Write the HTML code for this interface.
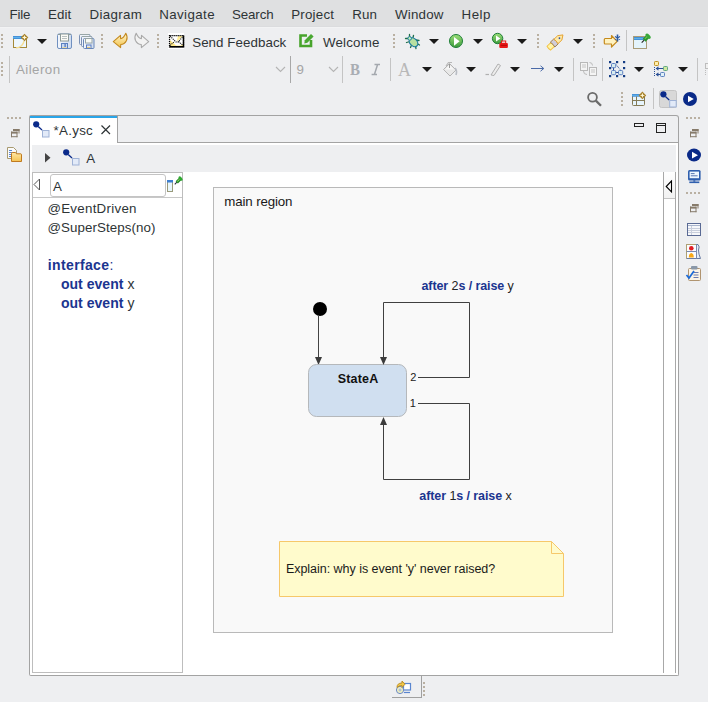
<!DOCTYPE html>
<html><head><meta charset="utf-8">
<style>
*{margin:0;padding:0;box-sizing:border-box}
html,body{width:708px;height:702px;overflow:hidden;background:#eeeff1;font-family:"Liberation Sans",sans-serif;color:#2e3436}
.a{position:absolute}
.t{position:absolute;white-space:pre;font-size:13.33px;line-height:16px}
.t b{font-weight:bold}
.grip{position:absolute;width:2px;background:repeating-linear-gradient(#b9b0a2 0 2px,transparent 2px 4px)}
.hgrip{position:absolute;height:2px;background:repeating-linear-gradient(90deg,#b9b0a2 0 2px,transparent 2px 4px)}
.sep{position:absolute;width:1px;background:#c4c4c4}
.dd{position:absolute;width:0;height:0;border-left:5px solid transparent;border-right:5px solid transparent;border-top:5px solid #1a1a1a}
svg{position:absolute;overflow:visible}
</style></head><body>
<div class="a" style="left:0;top:0;width:708px;height:26px;background:#dfe0e1"></div>
<div class="a" style="left:0;top:26px;width:708px;height:1px;background:#dbdcde"></div>
<div class="a" style="left:0;top:27px;width:708px;height:1px;background:#f2f3f4"></div>

<!-- toolbar row 1 -->
<div class="grip" style="left:1px;top:34px;height:14px"></div>
<div class="dd" style="left:37px;top:39px"></div>
<div class="grip" style="left:101px;top:34px;height:14px"></div>
<div class="grip" style="left:157px;top:34px;height:14px"></div>
<div class="grip" style="left:393px;top:34px;height:14px"></div>
<div class="dd" style="left:429px;top:39px"></div>
<div class="dd" style="left:473px;top:39px"></div>
<div class="dd" style="left:517px;top:39px"></div>
<div class="grip" style="left:537px;top:34px;height:14px"></div>
<div class="dd" style="left:573px;top:39px"></div>
<div class="grip" style="left:593px;top:34px;height:14px"></div>
<div class="sep" style="left:626px;top:30px;height:21px"></div>

<!-- toolbar row 2 -->
<div class="grip" style="left:1px;top:62px;height:14px"></div>
<div class="sep" style="left:9px;top:56px;height:27px"></div>
<div class="sep" style="left:290px;top:56px;height:27px;background:#a8a8a8"></div>
<div class="sep" style="left:342px;top:56px;height:27px"></div>
<div class="sep" style="left:390px;top:58px;height:23px"></div>
<div class="dd" style="left:422px;top:67px"></div>
<div class="dd" style="left:466px;top:67px"></div>
<div class="dd" style="left:510px;top:67px"></div>
<div class="dd" style="left:554px;top:67px"></div>
<div class="sep" style="left:573px;top:58px;height:23px"></div>
<div class="sep" style="left:602px;top:58px;height:23px"></div>
<div class="dd" style="left:634px;top:67px"></div>
<div class="dd" style="left:678px;top:67px"></div>
<div class="sep" style="left:697px;top:58px;height:23px"></div>

<!-- toolbar row 3 -->
<div class="grip" style="left:621px;top:92px;height:14px"></div>
<div class="sep" style="left:653px;top:88px;height:21px"></div>

<!-- trims -->
<div class="hgrip" style="left:7px;top:117px;width:14px"></div>
<div class="hgrip" style="left:686px;top:117px;width:14px"></div>
<div class="hgrip" style="left:686px;top:192px;width:14px"></div>

<!-- editor frame -->
<div class="a" style="left:29px;top:142px;width:650px;height:534px;border:1px solid #a3a3a3;border-top:none;border-radius:0 0 2px 2px;background:#fff"></div>
<div class="a" style="left:117px;top:115px;width:562px;height:28px;border:1px solid #a3a3a3;border-left:none;border-top-right-radius:3px;background:#eeeff1"></div>
<div class="a" style="left:29px;top:115px;width:89px;height:28px;border:1px solid #a3a3a3;border-bottom:none;border-top-left-radius:2px;background:#fff"></div>
<div class="a" style="left:30px;top:116px;width:87px;height:2px;background:#2aa5e8"></div>
<div class="a" style="left:32px;top:145px;width:644px;height:27px;background:#eeeff1"></div>

<!-- outline panel -->
<div class="a" style="left:32px;top:172px;width:151px;height:501px;border:1px solid #bdbdbd;background:#fff"></div>
<div class="a" style="left:33px;top:197px;width:149px;height:1px;background:#c8c8c8"></div>
<div class="a" style="left:50px;top:174px;width:116px;height:23px;border:1px solid #c4c4c4;border-radius:3px;background:#fff"></div>

<!-- palette strip -->
<div class="a" style="left:663px;top:172px;width:13px;height:501px;border-left:1px solid #a8a8a8;border-right:1px solid #a8a8a8;background:#fff"></div>
<div class="a" style="left:664px;top:172px;width:11px;height:27px;background:linear-gradient(#fff,#f2f2f2);border-bottom:1px solid #c4c4c4"></div>

<!-- diagram region -->
<div class="a" style="left:213px;top:187px;width:400px;height:446px;border:1px solid #b9b9b9;background:#f9f9f9"></div>

<!-- diagram svg -->
<svg width="708" height="702" style="left:0;top:0" shape-rendering="auto">
<circle cx="320" cy="309" r="7" fill="#000"/>
<rect x="318" y="316" width="1" height="42" fill="#444"/>
<path d="M315 357 L322 357 L318.5 365 Z" fill="#3c3c3c"/>
<rect x="308.5" y="364.5" width="98" height="52" rx="8" ry="8" fill="#d0dff0" stroke="#b5b8bb" stroke-width="1"/>
<path d="M418 377.5 H469.5 V302.5 H383.5 V358" fill="none" stroke="#404040" stroke-width="1"/>
<path d="M380 357 L387 357 L383.5 365 Z" fill="#3c3c3c"/>
<path d="M418 403.5 H469.5 V479.5 H383.5 V424" fill="none" stroke="#404040" stroke-width="1"/>
<path d="M380 425 L387 425 L383.5 417 Z" fill="#3c3c3c"/>
<path d="M279.5 541.5 H551.5 L563.5 553.5 V596.5 H279.5 Z" fill="#fffbcc" stroke="#f6c86a" stroke-width="1"/>
<path d="M551.5 541.5 V553.5 H563.5" fill="none" stroke="#f6c86a" stroke-width="1"/>
</svg>

<!-- status bar -->
<div class="a" style="left:392px;top:697px;width:30px;height:1px;background:#a0a0a0"></div>
<div class="a" style="left:421px;top:676px;width:1px;height:22px;background:#a0a0a0"></div>
<div class="grip" style="left:423px;top:682px;height:14px"></div>

<!-- TEXTS -->
<div class="t" style="left:9.5px;top:7px;letter-spacing:-0.17px;">File</div>
<div class="t" style="left:48.1px;top:7px;letter-spacing:0.07px;">Edit</div>
<div class="t" style="left:89.4px;top:7px;letter-spacing:0.37px;">Diagram</div>
<div class="t" style="left:159.2px;top:7px;letter-spacing:0.4px;">Navigate</div>
<div class="t" style="left:232.0px;top:7px;letter-spacing:-0.12px;">Search</div>
<div class="t" style="left:291.2px;top:7px;letter-spacing:0.23px;">Project</div>
<div class="t" style="left:352.2px;top:7px;letter-spacing:0.15px;">Run</div>
<div class="t" style="left:395.09999999999997px;top:7px;letter-spacing:0.18px;">Window</div>
<div class="t" style="left:461.5px;top:7px;letter-spacing:0.53px;">Help</div>
<div class="t" style="left:192.2px;top:35px;letter-spacing:0.06px;">Send Feedback</div>
<div class="t" style="left:323.0px;top:35px;letter-spacing:0.17px;">Welcome</div>
<div class="t" style="left:16.0px;top:62px;letter-spacing:0.43px;color:#a5a5a5">Aileron</div>
<div class="t" style="left:296.6px;top:62px;letter-spacing:0.0px;color:#a5a5a5">9</div>
<div class="t" style="left:53.5px;top:123px;letter-spacing:0.3px;">*A.ysc</div>
<div class="t" style="left:86.3px;top:151px;letter-spacing:0.0px;">A</div>
<div class="t" style="left:53.0px;top:179px;letter-spacing:0.0px;">A</div>
<div class="t" style="left:47.4px;top:201px;letter-spacing:0.27px;">@EventDriven</div>
<div class="t" style="left:47.4px;top:220px;letter-spacing:0.09px;">@SuperSteps(no)</div>
<div class="t" style="left:47.8px;top:257px;letter-spacing:0.36px;font-size:14px;color:#1b3590"><b>interface</b>:</div>
<div class="t" style="left:60.9px;top:276px;letter-spacing:0.04px;font-size:14px;color:#1b3590"><b>out event</b> <span style="color:#2e3436">x</span></div>
<div class="t" style="left:60.9px;top:295px;letter-spacing:0.04px;font-size:14px;color:#1b3590"><b>out event</b> <span style="color:#2e3436">y</span></div>
<div class="t" style="left:224.2px;top:194px;letter-spacing:-0.13px;color:#1a1a1a">main region</div>
<div class="t" style="left:337.7px;top:371px;letter-spacing:0.18px;font-size:12.5px;color:#111"><b>StateA</b></div>
<div class="t" style="left:410.2px;top:369px;letter-spacing:0.0px;font-size:11px;color:#222">2</div>
<div class="t" style="left:409.7px;top:395px;letter-spacing:0.0px;font-size:11px;color:#222">1</div>
<div class="t" style="left:421.5px;top:278px;letter-spacing:-0.09px;font-size:12.5px;color:#222"><b style="color:#1b3590">after</b> 2<b style="color:#1b3590">s / raise</b> y</div>
<div class="t" style="left:419.3px;top:488px;letter-spacing:-0.08px;font-size:12.5px;color:#222"><b style="color:#1b3590">after</b> 1<b style="color:#1b3590">s / raise</b> x</div>
<div class="t" style="left:285.9px;top:561px;letter-spacing:-0.03px;font-size:12.5px;color:#1a1a1a">Explain: why is event 'y' never raised?</div>
<div class="t" style="left:349.5px;top:61px;font-family:'Liberation Serif',serif;font-weight:bold;font-size:17px;line-height:18px;color:#a9adb3;transform:scaleX(0.88);transform-origin:0 0">B</div>
<div class="t" style="left:398px;top:61px;font-family:'Liberation Serif',serif;font-size:18px;line-height:18px;color:#b8b8b8">A</div>

<!-- ICONS -->
<svg width="708" height="702" style="left:0;top:0;pointer-events:none">
<defs>
<linearGradient id="gGold" x1="0" y1="0" x2="0" y2="1"><stop offset="0" stop-color="#fff6cf"/><stop offset="1" stop-color="#f2c24a"/></linearGradient>
<linearGradient id="gGreen" x1="0" y1="0" x2="0" y2="1"><stop offset="0" stop-color="#9ee07a"/><stop offset="1" stop-color="#3c9a3c"/></linearGradient>
<linearGradient id="gBlueBar" x1="0" y1="0" x2="0" y2="1"><stop offset="0" stop-color="#3b7fcf"/><stop offset="0.5" stop-color="#5db2ea"/><stop offset="1" stop-color="#3a80cf"/></linearGradient>
<linearGradient id="gFloppy" x1="0" y1="0" x2="1" y2="0"><stop offset="0" stop-color="#f4f7fc"/><stop offset="1" stop-color="#cfdcf0"/></linearGradient>
<linearGradient id="gFolder" x1="0" y1="0" x2="0" y2="1"><stop offset="0" stop-color="#ffe9a8"/><stop offset="1" stop-color="#f5c252"/></linearGradient>
<g id="star"><path d="M0 -3.8 L3.8 0 L0 3.8 L-3.8 0 Z" fill="#a8822a"/><path d="M0 -2.6 L0.7 -0.7 L2.6 0 L0.7 0.7 L0 2.6 L-0.7 0.7 L-2.6 0 L-0.7 -0.7 Z" fill="#fff8d8"/></g>
<g id="floppy">
 <rect x="0.5" y="0.5" width="14" height="14.5" rx="1.5" fill="url(#gFloppy)" stroke="#7090c0"/>
 <path d="M1 1 H14" stroke="#8c9c9a" stroke-width="1"/>
 <rect x="3.5" y="0.5" width="8" height="7" fill="#fbfbf6" stroke="#8c9a98"/>
 <path d="M5 3 H10 M5 5 H10" stroke="#b8c0c0" stroke-width="1"/>
 <rect x="4" y="9.5" width="7" height="5.5" fill="#5a80c0"/>
 <rect x="5" y="10.5" width="5" height="4" fill="#c8daf4"/>
 <rect x="7.5" y="10.5" width="1.2" height="3" fill="#4a70b8"/>
 <rect x="5" y="13.6" width="5" height="0.9" fill="#e8d8a0"/>
</g>
<g id="restore" fill="#867a6a"><rect x="2" y="0" width="6.5" height="2"/><rect x="7.5" y="0" width="1" height="4.5"/><rect x="0" y="2.6" width="6.5" height="5.6" fill="#eeeff1"/><rect x="0" y="2.6" width="6.5" height="2"/><rect x="0" y="2.6" width="1" height="5.6"/><rect x="5.5" y="2.6" width="1" height="5.6"/><rect x="0" y="7.2" width="6.5" height="1"/></g>
<g id="sc"><circle cx="3.2" cy="3.3" r="3.1" fill="#0a2a8a"/><path d="M5.2 5.5 L9 9" stroke="#0a2a8a" stroke-width="1.3"/><rect x="9.5" y="9.5" width="6.5" height="6.5" fill="#e2eaf8" stroke="#9fb2d6" stroke-width="1"/></g>
</defs>

<!-- row1 -->
<!-- new -->
<rect x="13.5" y="36.5" width="13" height="11" fill="#eef7fd" stroke="#a48a3a"/>
<rect x="13" y="36" width="11" height="3" fill="url(#gBlueBar)"/>
<path d="M24 41 Q23 47 16 48" stroke="#f6df95" stroke-width="1.5" fill="none"/>
<use href="#star" x="24.5" y="37.5"/>
<!-- save -->
<use href="#floppy" x="57" y="33.5"/>
<!-- save all -->
<rect x="79.5" y="34.5" width="10.5" height="10" rx="1" fill="#eef2fa" stroke="#7a90b4"/>
<path d="M80 34.5 H89.5" stroke="#98a6a6"/>
<rect x="81.5" y="36.5" width="10.5" height="10" rx="1" fill="#eef2fa" stroke="#7a90b4"/>
<path d="M82 36.5 H91.5" stroke="#98a6a6"/>
<rect x="83.5" y="38.5" width="10.5" height="10" rx="1" fill="url(#gFloppy)" stroke="#6a88b8"/>
<rect x="85.5" y="38.5" width="6.5" height="4.5" fill="#f8faf6" stroke="#98a6a6"/>
<rect x="86" y="44.5" width="5.5" height="4" fill="#5a7cc0"/>
<rect x="87" y="45.5" width="3.5" height="2.5" fill="#dfe8f6"/>
<rect x="87" y="47" width="3.5" height="1" fill="#e0c880"/>
<!-- undo -->
<path d="M113.3 41.6 L120.5 35.3 L120.6 38.6 Q123.5 38.5 125.8 33.2 Q128 37 126.5 40.5 Q124.5 44.5 120.7 44.5 L120.6 47.6 Z" fill="url(#gGold)" stroke="#c3891f" stroke-width="1.1" stroke-linejoin="round"/>
<!-- redo -->
<path d="M148.7 41.6 L141.5 35.3 L141.4 38.6 Q138.5 38.5 136.2 33.2 Q134 37 135.5 40.5 Q137.5 44.5 141.3 44.5 L141.4 47.6 Z" fill="#f2f2f2" stroke="#a9a9a9" stroke-width="1.1" stroke-linejoin="round"/>
<!-- envelope -->
<rect x="168" y="33" width="16" height="16" fill="#fff"/>
<path d="M170 40 L176 45.5 H181 L183 44 V46.5 H170 Z" fill="#ffe46a" opacity="0.8"/>
<path d="M178 36 L183 36 L176.5 42 Z" fill="#ffe46a" opacity="0.7"/>
<rect x="169.5" y="35.6" width="14" height="11.2" fill="none" stroke="#000" stroke-width="1.3" stroke-dasharray="1.3 0.7"/>
<path d="M169.5 46.8 H183.5 V35.6" fill="none" stroke="#000" stroke-width="1.4"/>
<path d="M170 36 L176 42 H178 L183.5 36 M170 45.5 L174.5 41.5 M178.5 41.5 L182.5 45" fill="none" stroke="#222" stroke-width="1.1" stroke-dasharray="1.2 0.8"/>
<!-- green edit -->
<path d="M307 35.5 H300.5 V46 H311 V40" fill="none" stroke="#48a42c" stroke-width="2.6"/>
<path d="M304.3 43.5 L304.8 40.3 L311 34 L313.6 36.6 L307.4 42.8 Z" fill="#4aa832"/>
<!-- bug -->
<g stroke="#1f6e4a" stroke-width="1.3" fill="none" stroke-linecap="round">
<path d="M409.5 38 L409.5 34.5 M413 37.5 L413.5 35.5 M408 38.5 L405.5 38.5 M410 41.5 L406.5 42.5 M412 44 L410.5 47.5 M415.5 46 L416 48.5 M416 40 L419 40.5 M417 43.5 L419.5 45"/>
</g>
<ellipse cx="413.5" cy="42.3" rx="3.6" ry="5" transform="rotate(-42 413.5 42.3)" fill="#b8e0a0" stroke="#1d7ca2" stroke-width="1.2"/>
<circle cx="409.7" cy="38.4" r="1.8" fill="#c8f0b8" stroke="#1d7ca2" stroke-width="1"/>
<!-- run -->
<circle cx="456" cy="41" r="6.5" fill="url(#gGreen)" stroke="#1e7e38" stroke-width="1"/>
<path d="M454 37 L459.6 41.3 L454 45.8 Z" fill="#fff"/>
<!-- run ext -->
<circle cx="497.6" cy="38.5" r="5.2" fill="url(#gGreen)" stroke="#1e7e38" stroke-width="1"/>
<path d="M496 35.6 L500.4 38.6 L496 41.6 Z" fill="#fff"/>
<rect x="499.3" y="43" width="8.6" height="5" rx="1" fill="#e81818"/>
<rect x="501.5" y="41" width="4.2" height="2.3" fill="none" stroke="#e81818" stroke-width="1"/>
<path d="M500.5 45.3 H507" stroke="#a00" stroke-width="0.8"/>
<!-- pen -->
<g transform="translate(555.8 41.6) rotate(-43)">
<path d="M-9.6 -2.6 H-4 V2.6 H-9.6 Q-10.3 0 -9.6 -2.6 Z" fill="#fff4a8" stroke="#f2c244" stroke-width="1"/>
<path d="M-4.4 -3.3 H0.2 Q1.1 0 0.2 3.3 H-4.4 Q-3.5 0 -4.4 -3.3 Z" fill="#d0ccd8" stroke="#9c7c4c" stroke-width="0.9"/>
<path d="M0.2 -3 H5.5 L9.8 0 L5.5 3 H0.2 Q1.1 0 0.2 -3 Z" fill="#fde9a8" stroke="#e4a02c" stroke-width="0.9"/>
<circle cx="5" cy="0" r="0.9" fill="#3050a8"/>
</g>
<!-- arrow star -->
<path d="M605.2 38.5 H611.5 V35.5 L617.2 41.3 L611.5 47 V44 H605.2 Q604.3 44 604.3 43 V39.5 Q604.3 38.5 605.2 38.5 Z" fill="#fff2c0" stroke="#c58a1c" stroke-width="1.2" stroke-linejoin="round"/>
<g stroke="#2d5aa0"><path d="M617.5 34.5 V41.5" stroke-width="1.6"/><path d="M615 36.6 L620 39.4 M620 36.6 L615 39.4" stroke-width="1.1"/></g>
<!-- window pen -->
<rect x="633.5" y="36.5" width="13" height="12" fill="#e4f4fb" stroke="#a89c78"/>
<rect x="634" y="37" width="12" height="3" fill="url(#gBlueBar)"/>
<g transform="translate(645.6 38.8) rotate(-45)">
<path d="M-2 0 H-5.5" stroke="#222" stroke-width="1.1"/>
<rect x="-2" y="-2" width="5" height="4" fill="#2a962e"/>
<ellipse cx="3.5" cy="0" rx="1.8" ry="3.2" fill="#38a83a"/>
<rect x="-0.5" y="-1" width="3" height="1" fill="#70c850"/>
</g>
<!-- row2 -->
<path d="M276 67 L280.5 71.5 L285 67" fill="none" stroke="#b4b4b4" stroke-width="1.1"/>
<path d="M329 67 L333.5 71.5 L338 67" fill="none" stroke="#b4b4b4" stroke-width="1.1"/>
<!-- bucket -->
<path d="M443.5 69.5 L449.5 63.5 L456 70 L450 76 Z" fill="#e8e8e8" stroke="#b4b4b4" stroke-width="1"/>
<path d="M445 69.5 L449.5 65 L454 69.5" fill="#f6f6f6"/>
<path d="M446 66 L448.5 62.5 L452 62.5" fill="none" stroke="#b8b8b8" stroke-width="1.2"/>
<path d="M449.5 64 V68" stroke="#9a9a9a" stroke-width="1"/>
<path d="M455 68 Q457.5 70.5 456 75" stroke="#b8bcc4" stroke-width="1.6" fill="none"/>
<!-- line pen -->
<path d="M485.5 74.5 H489" stroke="#b0b0b0" stroke-width="1.2"/>
<path d="M491 75 L498 64 L500.5 65.5 L494 75.5 Z" fill="#ececec" stroke="#b0b0b0" stroke-width="1"/>
<!-- arrow -->
<path d="M531 68.5 H543.5" stroke="#4a6aa8" stroke-width="1"/>
<path d="M540.5 65.8 L543.8 68.5 L540.5 71.2" fill="none" stroke="#4a6aa8" stroke-width="1"/>
<!-- grid copy (disabled) -->
<rect x="580.5" y="62.5" width="7" height="8" fill="#f4f4f4" stroke="#b8b8b8"/>
<rect x="589.5" y="67.5" width="7" height="8" fill="#f4f4f4" stroke="#b8b8b8"/>
<path d="M582 65 H586 M582 67 H586 M591 70 H595 M591 72 H595" stroke="#c4c4c4"/>
<path d="M589.5 62.5 Q592.5 62.5 592.5 65.5" fill="none" stroke="#bbb"/>
<path d="M583.5 71 Q583.5 74.5 587 74.5" fill="none" stroke="#bbb"/>
<!-- nodes -->
<g fill="#143c84">
<rect x="609" y="61" width="2.2" height="2.2"/><rect x="616" y="61" width="2.2" height="2.2"/><rect x="623" y="61" width="2.2" height="2.2"/>
<rect x="609" y="67" width="2.2" height="2.2"/><rect x="623" y="67" width="2.2" height="2.2"/>
<rect x="609" y="75" width="2.2" height="2.2"/><rect x="616" y="75" width="2.2" height="2.2"/><rect x="623" y="75" width="2.2" height="2.2"/>
</g>
<path d="M613.5 67 V71 M615.5 72.5 H618.5" stroke="#2a4f96" stroke-width="1"/>
<path d="M616 64.5 L620.5 70" stroke="#2a4f96" stroke-width="1" stroke-dasharray="1 0.8"/>
<rect x="611.5" y="63.5" width="4.2" height="4.2" rx="1" fill="#d8ecf0" stroke="#5a7cc0" stroke-width="1"/>
<rect x="611.5" y="70.5" width="4.2" height="4.2" rx="1" fill="#d8ecf0" stroke="#5a7cc0" stroke-width="1"/>
<rect x="618.5" y="70.5" width="4.2" height="4.2" rx="1" fill="#d8ecf0" stroke="#5a7cc0" stroke-width="1"/>
<!-- hierarchy -->
<rect x="654.5" y="61.5" width="4" height="4" rx="0.8" fill="#fff0b0" stroke="#c09020"/>
<rect x="663.5" y="66.5" width="4" height="4" rx="0.8" fill="#d0e8a0" stroke="#60a880"/>
<rect x="660.5" y="72.5" width="4" height="4" rx="0.8" fill="#e0f0f8" stroke="#5a80c0"/>
<path d="M656 68.5 H663 M656 74.5 H660" stroke="#2a4f96" stroke-width="1.1"/>
<path d="M658.5 66.8 L656.5 68.5 L658.5 70.2 M658.5 72.8 L656.5 74.5 L658.5 76.2" fill="none" stroke="#2a4f96" stroke-width="1.1"/>
<path d="M654.5 67 V76" stroke="#2a4f96" stroke-width="1" stroke-dasharray="1 1"/>
<!-- partial icon at edge -->
<rect x="705.5" y="63.5" width="4" height="5" fill="#f0f0f0" stroke="#bdbdbd"/>
<path d="M705.5 70 V76" stroke="#bdbdbd" stroke-dasharray="1 1"/>

<!-- italic I -->
<path d="M374.5 64.5 H380 M377.6 64.5 L374.4 74.5 M371.6 74.5 H377" stroke="#a4a8ae" stroke-width="1.5" fill="none"/>
<!-- row3 -->
<circle cx="592.5" cy="97.3" r="4.4" fill="none" stroke="#6b6b6b" stroke-width="1.8"/>
<path d="M595.8 100.6 L601 105.8" stroke="#6b6b6b" stroke-width="2.3"/>
<!-- table star -->
<rect x="632.5" y="94.5" width="12" height="11" rx="1" fill="#e6f4fc" stroke="#857a55"/>
<rect x="632" y="94" width="10" height="2.7" fill="url(#gBlueBar)"/>
<path d="M636.5 96.5 V105 M633 100.5 H644" stroke="#857a55" stroke-width="1"/>
<use href="#star" x="642.4" y="95.4"/>
<!-- toggle -->
<rect x="659.5" y="90.5" width="17" height="17" rx="2" fill="#d8d8d8" stroke="#c4c4c4"/>
<use href="#sc" x="660.2" y="91"/>
<!-- blue play -->
<circle cx="690" cy="99" r="7" fill="#0a2a88"/>
<path d="M688 95.7 L693.8 99 L688 102.3 Z" fill="#fff"/>

<!-- left trim -->
<use href="#restore" x="11" y="129"/>
<path d="M7.5 147.5 H13.5 L16.5 150.5 V158.5 H7.5 Z" fill="#fafafa" stroke="#a89a70"/>
<path d="M9 150.5 H12 M9 152.5 H13 M9 154.5 H12 M9 156.5 H12" stroke="#5a86d0" stroke-width="1"/>
<path d="M11.5 161.5 V153.5 Q11.5 152.5 12.5 152.5 H15.5 L16.5 153.8 H20.8 Q21.5 153.8 21.5 154.8 V161.5 Z" fill="url(#gFolder)" stroke="#c07a20" stroke-linejoin="round"/>

<!-- right trim -->
<use href="#restore" x="690" y="129"/>
<ellipse cx="694" cy="155" rx="7" ry="6.5" fill="#0a2a88"/>
<path d="M692 151.8 L698 155.2 L692 158.6 Z" fill="#fff"/>
<rect x="688" y="170" width="12.6" height="10.5" rx="1.5" fill="#2f5fae"/>
<rect x="689.6" y="171.6" width="9.4" height="6.6" fill="#eef7ff"/>
<path d="M690.8 173.6 H694.6 M690.8 175.8 H697.6" stroke="#4a6aa8" stroke-width="0.9"/>
<rect x="693.3" y="180.3" width="2" height="1.4" fill="#2f5fae"/>
<rect x="689.3" y="181.5" width="10" height="1.6" fill="#2f5fae"/>
<use href="#restore" x="690" y="204"/>
<rect x="687.5" y="223.5" width="13" height="12" fill="#f6f7fa" stroke="#5a6a94"/>
<path d="M688 225.5 H700" stroke="#a8b4cc" stroke-width="1"/>
<path d="M688 228.5 H700 M688 230.5 H700 M688 232.5 H700 M691.5 226 V235" stroke="#c8cedc" stroke-width="1"/>
<path d="M686.5 244.5 H698 Q700 246.5 698.5 250 Q698.5 254 700.5 258.5 H686.5 Z" fill="#e4eef8" stroke="#6a7aa0"/>
<path d="M686.5 258.5 V244.5 H696" fill="none" stroke="#b0a070"/>
<path d="M696.5 244.5 V258.5 M686.5 251.5 H696.5" stroke="#7a8ab0"/>
<rect x="687" y="245" width="9" height="6" fill="#fafcff"/>
<rect x="687" y="252" width="9" height="6" fill="#fafcff"/>
<circle cx="691.3" cy="248.3" r="2.3" fill="#e01c24"/>
<path d="M688.8 257.6 Q688.8 254.5 690 253.8 Q691.3 252.3 692.6 253.8 Q693.8 254.5 693.8 257.6 Z" fill="#f8a818"/>
<rect x="688.5" y="268.5" width="12" height="12" rx="1" fill="#fbf4e6" stroke="#b09470"/>
<rect x="691" y="266" width="6.5" height="3.5" rx="1" fill="#8a98a8"/>
<path d="M693.5 272.5 H698.5 M693.5 275 H698.5 M693.5 277.5 H698.5" stroke="#6a7ab0" stroke-width="1"/>
<path d="M686.5 275 L689 278 L694 271" fill="none" stroke="#1a6ad8" stroke-width="1.7"/>

<!-- tab -->
<use href="#sc" x="33" y="121"/>
<path d="M101.5 125.5 L110 134 M110 125.5 L101.5 134" stroke="#2e3436" stroke-width="1.2"/>
<!-- min/max -->
<rect x="634.5" y="123.5" width="9" height="3" fill="none" stroke="#222" stroke-width="1"/>
<rect x="656.5" y="123.5" width="9" height="9" fill="none" stroke="#222" stroke-width="1"/>
<path d="M657 125.5 H665" stroke="#222" stroke-width="1"/>
<!-- breadcrumb -->
<path d="M45 153 L50.5 157.8 L45 162.5 Z" fill="#444"/>
<use href="#sc" x="63" y="149"/>
<!-- outline triangle -->
<path d="M39.5 179 L34 184.5 L39.5 190 Z" fill="#fff" stroke="#555" stroke-width="1"/>
<!-- pin -->
<rect x="167.5" y="180.5" width="5" height="11" fill="#e8f6fc" stroke="#9a9a7a"/>
<rect x="167" y="180" width="6" height="2.5" fill="#3e7fd0"/>
<g transform="translate(178.3 180.8) rotate(-45)">
<path d="M-2 0 H-5" stroke="#223" stroke-width="1"/>
<rect x="-2.2" y="-1.6" width="4.6" height="3.2" fill="#1e8a22"/>
<ellipse cx="3.2" cy="0" rx="1.4" ry="2.6" fill="#2ea830"/>
<rect x="-1.2" y="-0.6" width="3" height="0.9" fill="#a0d870"/>
</g>
<!-- palette triangle -->
<path d="M671.5 181 L666.2 186.5 L671.5 192 Z" fill="#fafafa" stroke="#000" stroke-width="1.1"/>

<!-- status icon -->
<rect x="403.5" y="683.5" width="7" height="6.5" fill="#fff" stroke="#5a86d0" stroke-width="1.2"/>
<path d="M404 692.5 H410" stroke="#5a86d0" stroke-width="1.2"/>
<circle cx="400" cy="690" r="3.6" fill="#f0f0c0" stroke="#6a88c8" stroke-width="1"/>
<circle cx="400" cy="690" r="1" fill="#fff" stroke="#6a88c8" stroke-width="0.6"/>
<path d="M397 687.5 Q397 683 402 683 V681 L405 684.2 L402 687.4 V685.5 Q399 685.5 397 687.5 Z" fill="#f2c84a" stroke="#b88a20" stroke-width="0.9"/>
</svg>

</body></html>
